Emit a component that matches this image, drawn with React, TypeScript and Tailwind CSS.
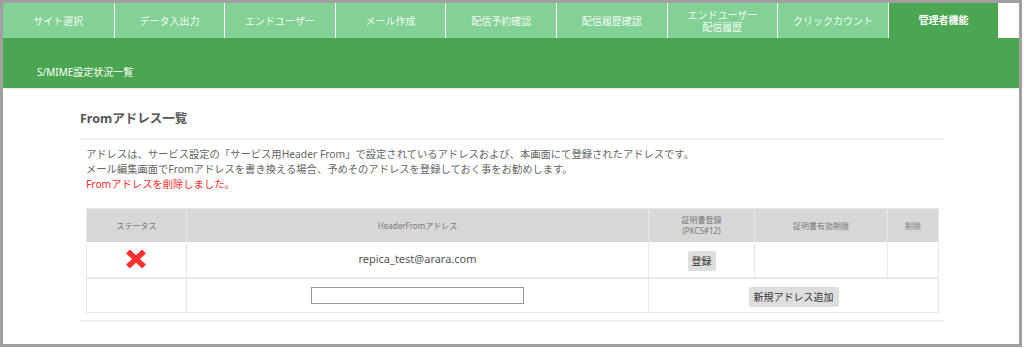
import React from "react";

const tabs = [
  ["サイト選択"],
  ["データ入出力"],
  ["エンドユーザー"],
  ["メール作成"],
  ["配信予約確認"],
  ["配信履歴確認"],
  ["エンドユーザー", "配信履歴"],
  ["クリックカウント"],
];

function RedX() {
  return (
    <svg width="22" height="20" viewBox="0 0 22 20">
      <line x1="3" y1="2.5" x2="19" y2="17.5" stroke="#ff3030" strokeWidth="5.5" />
      <line x1="19" y1="2.5" x2="3" y2="17.5" stroke="#ff3030" strokeWidth="5.5" />
    </svg>
  );
}

export default function App() {
  return (
    <div className="w-[1024px] h-[348px] bg-white font-['Noto_Sans','Noto_Sans_CJK_JP',sans-serif]">
      <div className="w-[1022px] h-[347px] border-[3px] border-[#a0a0a0] flex flex-col overflow-hidden">
        {/* tabs */}
        <div className="flex h-[35px] shrink-0">
          {tabs.map((t, i) => (
            <div
              key={i}
              className={`w-[110.6px] h-full bg-[#83d196] flex flex-col items-center justify-center text-[10px] leading-[12px] text-[#f2faf3] ${
                i > 0 ? "border-l border-white" : ""
              }`}
            >
              {t.map((s, j) => (
                <span key={j}>{s}</span>
              ))}
            </div>
          ))}
          <div className="w-[110.6px] h-full bg-[#4ba651] border-l border-white flex items-center justify-center text-[10px] font-bold text-white">
            管理者機能
          </div>
          <div className="flex-1 bg-white" />
        </div>
        {/* band */}
        <div className="h-[51px] shrink-0 bg-[#4ba651] border-b border-[#e6efe9] pl-[34px] pt-[27px] text-[10px] leading-[14px] text-white">
          S/MIME設定状況一覧
        </div>
        {/* content */}
        <div className="pl-[77px]">
          <div className="w-[864px]">
            <div className="mt-[21px] pb-[10px] border-b-2 border-[#efefef] text-[12.5px] leading-[18px] font-bold text-[#555]">
              Fromアドレス一覧
            </div>
            <div className="pl-[6px] pt-[7px] text-[10.3px] leading-[15px] text-[#666]">
              <div>アドレスは、サービス設定の「サービス用Header From」で設定されているアドレスおよび、本画面にて登録されたアドレスです。</div>
              <div>メール編集画面でFromアドレスを書き換える場合、予めそのアドレスを登録しておく事をお勧めします。</div>
              <div className="text-[#ff2a2a]">Fromアドレスを削除しました。</div>
            </div>
            <div className="pl-[6px] pt-[16px] pb-[7px] border-b-2 border-[#efefef]">
              <table className="w-[852px] border-collapse table-fixed border border-[#e8e8e8]">
                <colgroup>
                  <col className="w-[100px]" />
                  <col className="w-[462px]" />
                  <col className="w-[106px]" />
                  <col className="w-[133px]" />
                  <col className="w-[51px]" />
                </colgroup>
                <thead>
                  <tr className="h-[33px] bg-[#d7d7d7] text-[8px] leading-[11px] text-[#777] font-normal">
                    <th className="font-normal border-r border-[#e6e6e6]">ステータス</th>
                    <th className="font-normal border-r border-[#e6e6e6]">HeaderFromアドレス</th>
                    <th className="font-normal border-r border-[#e6e6e6]">
                      証明書登録
                      <br />
                      (PKCS#12)
                    </th>
                    <th className="font-normal border-r border-[#e6e6e6]">証明書有効期限</th>
                    <th className="font-normal">削除</th>
                  </tr>
                </thead>
                <tbody>
                  <tr className="h-[36px] border-b-2 border-[#e8e8e8]">
                    <td className="border-r border-[#e8e8e8]">
                      <div className="flex justify-center pr-[2px]">
                        <RedX />
                      </div>
                    </td>
                    <td className="border-r border-[#e8e8e8] text-center text-[11px] text-[#555]">
                      repica_test@arara.com
                    </td>
                    <td className="border-r border-[#e8e8e8] text-center">
                      <button className="bg-[#dedede] rounded-[2px] px-[4px] h-[20px] text-[10px] text-[#333] leading-[20px]">
                        登録
                      </button>
                    </td>
                    <td className="border-r border-[#e8e8e8]"></td>
                    <td></td>
                  </tr>
                  <tr className="h-[35px]">
                    <td className="border-r border-[#e8e8e8]"></td>
                    <td className="border-r border-[#e8e8e8]">
                      <div className="flex justify-center pt-[1px]">
                        <input
                          className="w-[213px] h-[17px] border border-[#999] bg-white outline-none"
                          readOnly
                        />
                      </div>
                    </td>
                    <td colSpan={3} className="text-center">
                      <button className="bg-[#dedede] rounded-[2px] px-[5px] h-[20px] text-[10px] text-[#333] leading-[20px]">
                        新規アドレス追加
                      </button>
                    </td>
                  </tr>
                </tbody>
              </table>
            </div>
          </div>
        </div>
      </div>
    </div>
  );
}
